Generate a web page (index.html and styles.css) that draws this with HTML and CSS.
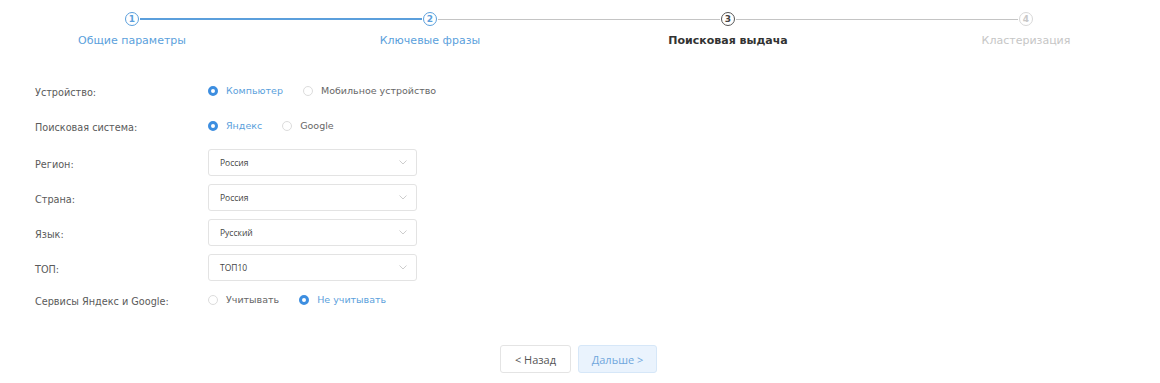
FILE: index.html
```html
<!DOCTYPE html>
<html lang="ru">
<head>
    <meta charset="UTF-8">
    <title>Поисковая выдача</title>
    <link rel="stylesheet" href="styles.css">
</head>
<body>

    <div class="steps">
        <div class="step done line-done">
            <span class="step-num">1</span>
            <span class="step-title">Общие параметры</span>
        </div>
        <div class="step done">
            <span class="step-num">2</span>
            <span class="step-title">Ключевые фразы</span>
        </div>
        <div class="step current">
            <span class="step-num">3</span>
            <span class="step-title">Поисковая выдача</span>
        </div>
        <div class="step todo">
            <span class="step-num">4</span>
            <span class="step-title">Кластеризация</span>
        </div>
    </div>

    <form class="settings">
        <div class="row">
            <span class="label">Устройство:</span>
            <div class="radios">
                <label class="radio checked"><span class="dot"></span>Компьютер</label>
                <label class="radio"><span class="dot"></span>Мобильное устройство</label>
            </div>
        </div>
        <div class="row">
            <span class="label">Поисковая система:</span>
            <div class="radios">
                <label class="radio checked"><span class="dot"></span>Яндекс</label>
                <label class="radio"><span class="dot"></span>Google</label>
            </div>
        </div>
        <div class="row first-select">
            <span class="label">Регион:</span>
            <div class="select">Россия
                <svg class="chevron" width="8" height="5" viewBox="0 0 8 5"><path d="M0.5 0.5 L4 4 L7.5 0.5" fill="none" stroke="#cdcdcd" stroke-width="1"/></svg>
            </div>
        </div>
        <div class="row">
            <span class="label">Страна:</span>
            <div class="select">Россия
                <svg class="chevron" width="8" height="5" viewBox="0 0 8 5"><path d="M0.5 0.5 L4 4 L7.5 0.5" fill="none" stroke="#cdcdcd" stroke-width="1"/></svg>
            </div>
        </div>
        <div class="row">
            <span class="label">Язык:</span>
            <div class="select">Русский
                <svg class="chevron" width="8" height="5" viewBox="0 0 8 5"><path d="M0.5 0.5 L4 4 L7.5 0.5" fill="none" stroke="#cdcdcd" stroke-width="1"/></svg>
            </div>
        </div>
        <div class="row">
            <span class="label">ТОП:</span>
            <div class="select">ТОП10
                <svg class="chevron" width="8" height="5" viewBox="0 0 8 5"><path d="M0.5 0.5 L4 4 L7.5 0.5" fill="none" stroke="#cdcdcd" stroke-width="1"/></svg>
            </div>
        </div>
        <div class="row services">
            <span class="label">Сервисы Яндекс и Google:</span>
            <div class="radios">
                <label class="radio"><span class="dot"></span>Учитывать</label>
                <label class="radio checked"><span class="dot"></span>Не учитывать</label>
            </div>
        </div>
    </form>

    <div class="buttons">
        <button class="btn back">&lt; Назад</button>
        <button class="btn next">Дальше &gt;</button>
    </div>

</body>
</html>
```

FILE: styles.css
```css
/* Core styles */
body {
    margin: 0;
    font-family: "DejaVu Sans", Verdana, sans-serif;
    color: #555;
    background: #fff;
}

/* Wizard steps */
.steps {
    display: grid;
    grid-template-columns: repeat(4, 298px);
    margin-left: -17px;
    padding-top: 12px;
}

.step {
    position: relative;
    display: flex;
    flex-direction: column;
    align-items: center;
}

.step:not(:last-child)::after {
    content: "";
    position: absolute;
    top: 7px;
    left: calc(50% + 8px);
    width: calc(100% - 16px);
    height: 1px;
    background: #c4c4c4;
}

.step.line-done::after {
    background: #5b9fdc;
    height: 2px;
    top: 6px;
}

.step-num {
    width: 12px;
    height: 12px;
    border: 1px solid #5b9fdc;
    border-radius: 50%;
    font-size: 9px;
    font-weight: bold;
    line-height: 12px;
    text-align: center;
    color: #5b9fdc;
}

.step-title {
    margin-top: 8px;
    font-size: 11px;
    color: #5b9fdc;
}

.step.current .step-num {
    border-color: #555;
    color: #444;
}

.step.current .step-title {
    font-weight: bold;
    color: #333;
}

.step.todo .step-num {
    border-color: #d8d8d8;
    color: #c8c8c8;
}

.step.todo .step-title {
    color: #c6c6c6;
}

/* Form */
.settings {
    display: flex;
    flex-direction: column;
    gap: 8px;
    margin-top: 30px;
    padding-left: 35px;
}

.row {
    display: grid;
    grid-template-columns: 173px 209px;
    align-items: center;
    min-height: 27px;
}

.row.first-select {
    margin-top: 2px;
}

.row.services {
    margin-top: -3px;
}

.label {
    font-size: 9.7px;
    color: #5a5a5a;
    padding-top: 3px;
}

.radios {
    display: flex;
    gap: 20px;
    white-space: nowrap;
}

.radio {
    display: flex;
    align-items: center;
    gap: 8px;
    font-size: 9.5px;
    color: #666;
}

.radio .dot {
    box-sizing: border-box;
    width: 10px;
    height: 10px;
    border: 1px solid #dcdcdc;
    border-radius: 50%;
    background: #fff;
}

.radio.checked {
    color: #5b9fdc;
}

.radio.checked .dot {
    border: 3px solid #3d8ee0;
    background: #fff;
}

.select {
    box-sizing: border-box;
    display: flex;
    align-items: center;
    justify-content: space-between;
    height: 27px;
    padding: 0 9px 0 11px;
    border: 1px solid #e3e3e3;
    border-radius: 3px;
    font-family: "Open Sans", sans-serif;
    font-size: 8.5px;
    color: #444;
}

/* Navigation buttons */
.buttons {
    display: flex;
    justify-content: center;
    gap: 7px;
    margin-top: 32px;
    padding-right: 3px;
}

.btn {
    height: 28px;
    border-radius: 3px;
    font-family: "Open Sans", sans-serif;
    font-size: 11px;
    cursor: pointer;
}

.btn.back {
    width: 71px;
    background: #fff;
    border: 1px solid #e4e4e4;
    color: #555;
}

.btn.next {
    width: 79px;
    background: #eaf3fd;
    border: 1px solid #d6e7f8;
    color: #6fa6dc;
}
```
